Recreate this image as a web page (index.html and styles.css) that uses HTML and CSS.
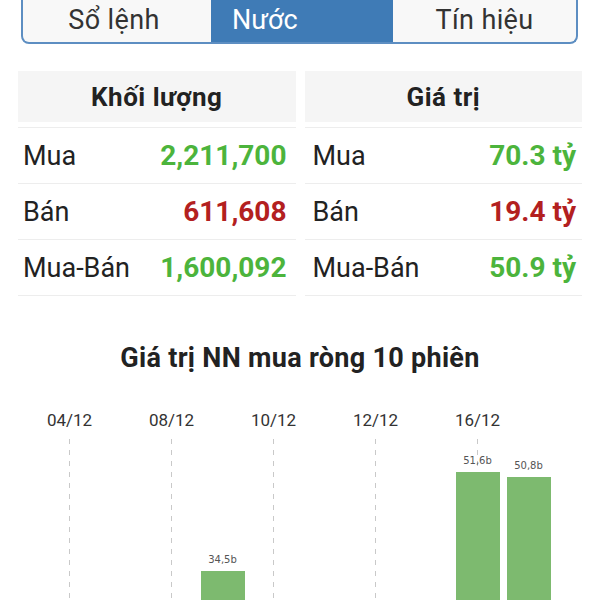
FILE: index.html
```html
<!DOCTYPE html>
<html lang="vi">
<head>
<meta charset="utf-8">
<title>Nước</title>
<link rel="stylesheet" href="styles.css">
</head>
<body>
<div class="tabs">
  <div class="tab">Sổ lệnh</div>
  <div class="tab tab-active">Nước</div>
  <div class="tab">Tín hiệu</div>
</div>

<div class="stats">
  <div class="panel">
    <div class="panel-head">Khối lượng</div>
    <div class="row"><span class="label">Mua</span><span class="val up">2,211,700</span></div>
    <div class="row"><span class="label">Bán</span><span class="val down">611,608</span></div>
    <div class="row"><span class="label">Mua-Bán</span><span class="val up">1,600,092</span></div>
  </div>
  <div class="panel panel-right">
    <div class="panel-head">Giá trị</div>
    <div class="row"><span class="label">Mua</span><span class="val up">70.3 tỷ</span></div>
    <div class="row"><span class="label">Bán</span><span class="val down">19.4 tỷ</span></div>
    <div class="row"><span class="label">Mua-Bán</span><span class="val up">50.9 tỷ</span></div>
  </div>
</div>

<h2 class="chart-title">Giá trị NN mua ròng 10 phiên</h2>

<div class="chart">
  <div class="col tick"><div class="date">04/12</div><div class="plot"></div></div>
  <div class="col"><div class="date"></div><div class="plot"></div></div>
  <div class="col tick"><div class="date">08/12</div><div class="plot"></div></div>
  <div class="col"><div class="date"></div><div class="plot"><div class="bar-val">34,5b</div><div class="bar" style="height:200px"></div></div></div>
  <div class="col tick"><div class="date">10/12</div><div class="plot"></div></div>
  <div class="col"><div class="date"></div><div class="plot"></div></div>
  <div class="col tick"><div class="date">12/12</div><div class="plot"></div></div>
  <div class="col"><div class="date"></div><div class="plot"></div></div>
  <div class="col tick"><div class="date">16/12</div><div class="plot"><div class="bar-val">51,6b</div><div class="bar" style="height:299px"></div></div></div>
  <div class="col"><div class="date"></div><div class="plot"><div class="bar-val">50,8b</div><div class="bar" style="height:294px"></div></div></div>
</div>
</body>
</html>
```
FILE: styles.css
```css
html, body {
  margin: 0;
  padding: 0;
  height: 600px;
  overflow: hidden;
  background: #ffffff;
}

body {
  font-family: Roboto, "Noto Sans", "Liberation Sans", sans-serif;
  color: #222;
}

.tabs {
  display: grid;
  grid-template-columns: 188px 182px 1fr;
  margin: -4px 22px 0 21px;
  height: 48px;
  box-sizing: border-box;
  border: 2px solid #5d8ec2;
  border-top: none;
  border-radius: 0 0 8px 8px;
  overflow: hidden;
  background: #f8f8f8;
}

.tab {
  display: flex;
  align-items: center;
  justify-content: center;
  font-size: 27px;
  letter-spacing: 0.4px;
  color: #333;
  padding-top: 2px;
}

.tab:first-child {
  padding-right: 6px;
}

.tab-active {
  background: #3f7bb6;
  color: #ffffff;
  justify-content: flex-start;
  padding-left: 21px;
  letter-spacing: 0;
}

.stats {
  display: flex;
  gap: 9px;
  margin: 27px 18px 0;
}

.panel {
  flex: 1;
}

.panel-head {
  height: 51px;
  background: #f5f5f5;
  display: flex;
  align-items: center;
  justify-content: center;
  font-weight: 700;
  font-size: 26px;
  letter-spacing: 0.5px;
  color: #222;
  margin-bottom: 5px;
}

.row {
  height: 56px;
  box-sizing: border-box;
  border-top: 1px solid #ededed;
  display: flex;
  align-items: center;
  justify-content: space-between;
  padding: 0 9px 0 5px;
  font-size: 27px;
}

.row:last-child {
  height: 57px;
  border-bottom: 1px solid #ededed;
}

.panel-right .row {
  padding: 0 6px 0 8px;
}

.label {
  color: #222;
}

.val {
  font-weight: 700;
  font-size: 28px;
}

.up {
  color: #4cb43c;
}

.down {
  color: #b3201f;
}

.chart-title {
  margin: 47px 0 0;
  text-align: center;
  font-size: 27px;
  letter-spacing: 0.3px;
  line-height: 30px;
  font-weight: 700;
  color: #222;
}

.chart {
  display: grid;
  grid-template-columns: repeat(10, 51px);
  margin: 37px 0 0 44px;
}

.col {
  display: flex;
  flex-direction: column;
  align-items: center;
}

.date {
  height: 20px;
  line-height: 20px;
  font-size: 17px;
  color: #333;
  white-space: nowrap;
  margin-bottom: 9px;
}

.plot {
  height: 332px;
  width: 100%;
  display: flex;
  flex-direction: column;
  justify-content: flex-end;
  align-items: center;
}

.tick .plot {
  background-image: repeating-linear-gradient(to bottom, #c9c9c9 0 5px, transparent 5px 11px);
  background-size: 1px 100%;
  background-position: center top;
  background-repeat: no-repeat;
}

.bar-val {
  font-family: "DejaVu Sans", "Liberation Sans", sans-serif;
  font-size: 10px;
  line-height: 13px;
  color: #555;
  margin-bottom: 5px;
}

.bar {
  width: 44px;
  background: #7dba6f;
}
```
